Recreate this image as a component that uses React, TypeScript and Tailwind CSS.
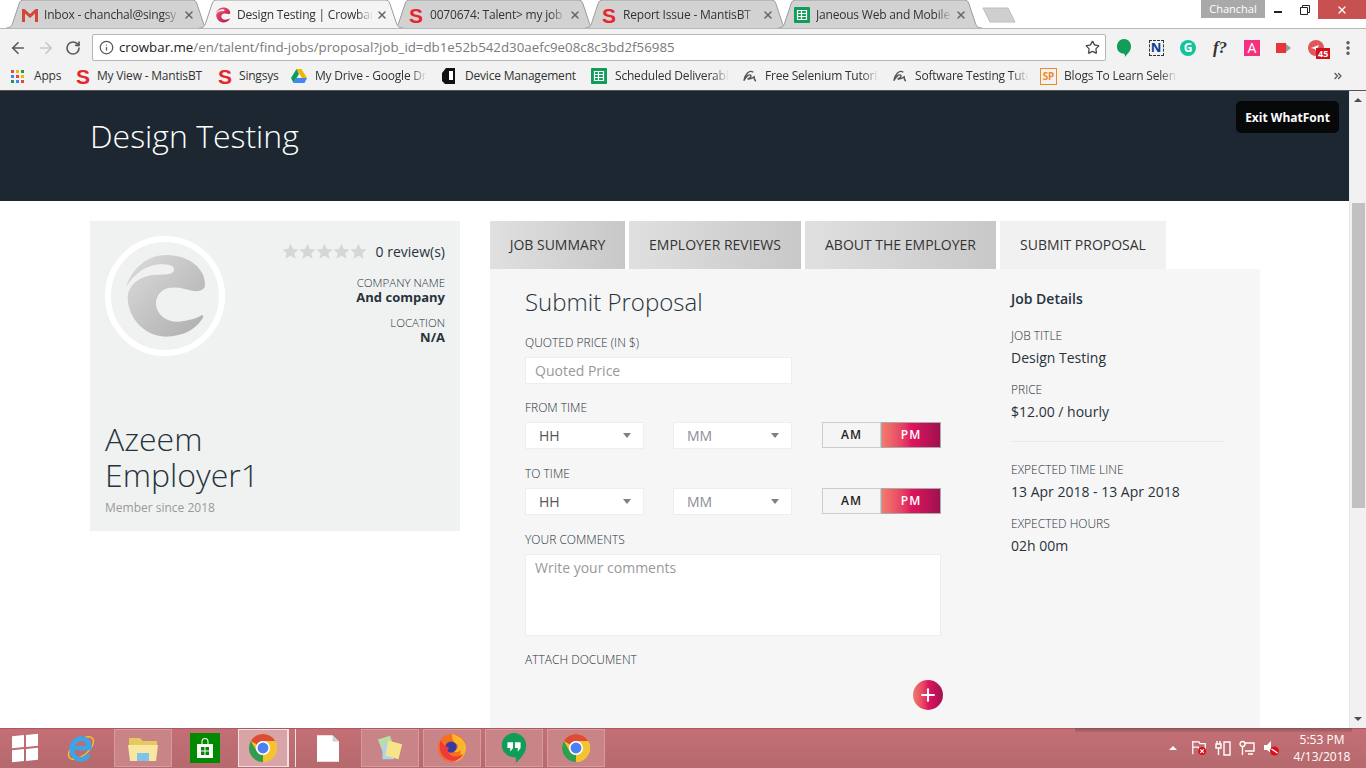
import { ArrowLeft, ArrowRight, ChevronsRight, Info, MoreVertical, Plus, RotateCw, Star, X } from 'lucide-react';
import type { ReactNode } from 'react';

const CROWBAR_PATH =
    'M138 232C150 190 190 135 260 135C330 135 378 180 375 225C374 240 360 245 340 243C315 238 290 228 262 235C240 242 226 262 228 285C231 315 262 337 295 335C325 333 350 325 365 316C372 314 370 322 366 328C345 360 305 380 258 380C195 380 145 325 143 265C143 225 180 195 230 194C255 194 282 195 282 178C282 165 262 163 240 163C195 165 160 195 138 232Z';

function CrowbarFavicon() {
    return (
        <svg viewBox="125 125 260 265" className="h-[16px] w-[16px]">
            <defs>
                <linearGradient id="fav" x1="0" y1="0" x2="1" y2="1">
                    <stop offset="0" stopColor="#ef5a6f" />
                    <stop offset="1" stopColor="#b0124f" />
                </linearGradient>
            </defs>
            <path d={CROWBAR_PATH} fill="url(#fav)" />
        </svg>
    );
}

function GmailIcon() {
    return (
        <svg viewBox="0 0 16 14" className="h-[14px] w-[16px]">
            <path d="M0 1h2.500L8 6l5.500-5H16v13h-3V5.500L8 10 3 5.500V14H0z" fill="#d44638" />
        </svg>
    );
}

function SingsysIcon() {
    return <span className="w-[16px] text-center font-['Liberation_Sans',sans-serif] text-[21px] leading-none font-bold text-[#e5262a]">S</span>;
}

function SheetsIcon() {
    return (
        <svg viewBox="0 0 16 16" className="h-[16px] w-[16px]">
            <rect width="16" height="16" rx="1" fill="#0f9d58" />
            <path d="M3.500 3.500h9v9h-9zM3.500 6.500h9M3.500 9.500h9M7.500 3.500v9" fill="none" stroke="#fff" strokeWidth="1.200" />
        </svg>
    );
}

function TabShape({ active }: { active: boolean }) {
    return (
        <svg viewBox="0 0 204 28" className="absolute inset-0 h-[28px] w-[204px]">
            <path
                d="M0 28C5 28 6 25 7 22L13 4C14 1 15 0 18 0H186C189 0 190 1 191 4L197 22C198 25 199 28 204 28"
                fill={active ? '#f4f4f4' : '#d2d2d2'}
                stroke="#9c9c9c"
            />
        </svg>
    );
}

const TABS: { title: string; icon: ReactNode; active?: boolean }[] = [
    { title: 'Inbox - chanchal@singsy', icon: <GmailIcon /> },
    { title: 'Design Testing | Crowbar', icon: <CrowbarFavicon />, active: true },
    { title: '0070674: Talent> my job', icon: <SingsysIcon /> },
    { title: 'Report Issue - MantisBT', icon: <SingsysIcon /> },
    { title: 'Janeous Web and Mobile', icon: <SheetsIcon /> },
];

function TabStrip() {
    return (
        <div className="relative flex h-[28px] shrink-0 bg-white pl-[6px]">
            {TABS.map((tab) => (
                <div key={tab.title} className={`relative -mr-[11px] h-[28px] w-[204px] shrink-0 ${tab.active ? 'z-10' : ''}`}>
                    <TabShape active={!!tab.active} />
                    <div className="relative flex h-full items-center pt-[2px] pr-[15px] pl-[16px]">
                        <span className="flex w-[22px] shrink-0 justify-start">{tab.icon}</span>
                        <span className="w-[136px] text-[12px] tracking-[-0.2px] whitespace-nowrap text-[#333] [mask-image:linear-gradient(to_right,black_88%,transparent)]">
                            {tab.title}
                        </span>
                        <X className="ml-[3px] h-[12px] w-[12px] shrink-0 text-[#666]" strokeWidth={3} />
                    </div>
                </div>
            ))}
            <svg viewBox="0 0 34 16" className="mt-[7px] ml-[11px] h-[16px] w-[34px]">
                <path d="M1 1H26L33 15H8Z" fill="#cfcfcf" stroke="#bdbdbd" />
            </svg>
            <div className="ml-auto flex h-[19px] items-start">
                <div className="flex h-[18px] w-[64px] items-center justify-center bg-[#a9a9a9] text-[11px] text-white">Chanchal</div>
                <div className="flex h-[19px] w-[26px] items-center justify-center pt-[5px]">
                    <div className="h-[2px] w-[8px] bg-[#222]" />
                </div>
                <div className="flex h-[19px] w-[27px] items-center justify-center">
                    <svg viewBox="0 0 10 10" className="h-[10px] w-[10px]" fill="none" stroke="#222">
                        <path d="M.5 2.500h7v7h-7zM2.500 2.500v-2h7v7h-2" />
                    </svg>
                </div>
                <div className="flex h-[19px] w-[48px] items-center justify-center bg-[#c75050]">
                    <X className="h-[12px] w-[12px] text-white" strokeWidth={2.500} />
                </div>
            </div>
        </div>
    );
}

function ExtensionIcons() {
    return (
        <div className="ml-[2px] flex items-center">
            <span className="flex w-[32px] justify-center">
                <svg viewBox="0 0 16 20" className="h-[20px] w-[16px]">
                    <path d="M8 1c4 0 7 3 7 7.500S12 15 9 19c0-3-.5-3.500-2-3.500C3 15 1 12.500 1 8.500S4 1 8 1z" fill="#0f9d58" />
                </svg>
            </span>
            <span className="flex w-[32px] justify-center">
                <span className="flex h-[16px] w-[15px] items-center justify-center border border-dashed border-[#333] text-[13px] leading-none font-bold text-[#0b3d91]">N</span>
            </span>
            <span className="flex w-[32px] justify-center">
                <span className="flex h-[16px] w-[16px] items-center justify-center rounded-full bg-[#15c39a] text-[12px] leading-none font-bold text-white">G</span>
            </span>
            <span className="flex w-[32px] justify-center font-['Liberation_Serif',serif] text-[17px] leading-none font-bold text-[#333] italic">f?</span>
            <span className="flex w-[32px] justify-center">
                <span className="flex h-[16px] w-[16px] items-center justify-center bg-[#f5317f] text-[14px] leading-none text-white">A</span>
            </span>
            <span className="flex w-[32px] justify-center">
                <svg viewBox="0 0 16 14" className="h-[14px] w-[16px]">
                    <path d="M0 2h10v10H0z" fill="#e8343a" />
                    <path d="M10 3l5 4-5 4z" fill="#9a9a9a" />
                </svg>
            </span>
            <span className="relative flex w-[32px] justify-center">
                <svg viewBox="0 0 16 16" className="h-[16px] w-[16px]">
                    <circle cx="8" cy="8" r="8" fill="#e0565b" />
                    <path d="M3 8l8-3-3 6-1-2z" fill="#fff" />
                </svg>
                <span className="absolute top-[8px] left-[16px] bg-[#d0101c] px-[2px] text-[9px] leading-[11px] font-bold text-white">45</span>
            </span>
            <span className="flex w-[32px] justify-center">
                <MoreVertical className="h-[18px] w-[18px] text-[#555]" strokeWidth={2.500} />
            </span>
        </div>
    );
}

function Toolbar() {
    return (
        <div className="flex h-[34px] shrink-0 items-center border-t border-[#b8b8b8] bg-[#f2f2f2] pt-[4px] pl-[9px]">
            <ArrowLeft className="h-[18px] w-[18px] text-[#5a5a5a]" strokeWidth={2.200} />
            <ArrowRight className="ml-[10px] h-[18px] w-[18px] text-[#c8c8c8]" strokeWidth={2.200} />
            <RotateCw className="ml-[10px] h-[16px] w-[16px] text-[#5a5a5a]" strokeWidth={2.500} />
            <div className="ml-[11px] flex h-[27px] w-[1014px] items-center rounded-[2px] border border-[#b5b5b5] bg-white pr-[5px] pl-[6px] text-[13.3px]">
                <Info className="h-[15px] w-[15px] text-[#555]" strokeWidth={2} />
                <span className="ml-[5px] text-[#222]">crowbar.me</span>
                <span className="text-[#7a7a7a]">/en/talent/find-jobs/proposal?job_id=db1e52b542d30aefc9e08c8c3bd2f56985</span>
                <Star className="ml-auto h-[15px] w-[15px] text-[#444]" strokeWidth={2} />
            </div>
            <ExtensionIcons />
        </div>
    );
}

function AppsIcon() {
    const colors = ['#e8453c', '#f4b400', '#0f9d58', '#4285f4', '#e8453c', '#f4b400', '#0f9d58', '#4285f4', '#e8453c'];
    return (
        <span className="grid w-[13px] grid-cols-3 gap-[2px]">
            {colors.map((c, i) => (
                <span key={i} className="h-[3px] w-[3px]" style={{ background: c }} />
            ))}
        </span>
    );
}

function DriveIcon() {
    return (
        <svg viewBox="0 0 16 14" className="h-[14px] w-[16px]">
            <path d="M5.500 0h5L16 9h-5z" fill="#f4b400" />
            <path d="M5.500 0L0 9l2.500 5L8 5z" fill="#0f9d58" />
            <path d="M2.500 14h11L16 9H5z" fill="#4285f4" />
        </svg>
    );
}

function DeviceIcon() {
    return (
        <svg viewBox="0 0 16 18" className="h-[18px] w-[16px]">
            <path d="M5 1h9v16H4L1 14V6z" fill="#111" />
            <rect x="8" y="4" width="4" height="9" fill="#fff" />
        </svg>
    );
}

function TutorialIcon() {
    return (
        <svg viewBox="0 0 16 14" className="h-[14px] w-[15px]" fill="none" stroke="#555" strokeWidth="1.500">
            <path d="M12 3C8 0 3 5 2 12 4 8 7 5 9 6c2 1-1 4-3 4 3 1 5-1 7-2 0 2 0 4 2 4" />
        </svg>
    );
}

function SpIcon() {
    return <span className="flex h-[17px] w-[17px] items-center justify-center border border-[#f08a24] text-[10px] leading-none font-bold text-[#f08a24]">SP</span>;
}

const BOOKMARKS: { label: string; icon: ReactNode; box: string; text: string; fade?: boolean }[] = [
    { label: 'Apps', icon: <AppsIcon />, box: 'w-[64px]', text: 'ml-[10px] w-[28px]' },
    { label: 'My View - MantisBT', icon: <SingsysIcon />, box: 'w-[142px]', text: 'ml-[6px] w-[106px]' },
    { label: 'Singsys', icon: <SingsysIcon />, box: 'w-[74px]', text: 'ml-[6px] w-[40px]' },
    { label: 'My Drive - Google Dr', icon: <DriveIcon />, box: 'w-[150px]', text: 'ml-[8px] w-[112px]', fade: true },
    { label: 'Device Management', icon: <DeviceIcon />, box: 'w-[150px]', text: 'ml-[8px] w-[110px]' },
    { label: 'Scheduled Deliverabl', icon: <SheetsIcon />, box: 'w-[151px]', text: 'ml-[8px] w-[114px]', fade: true },
    { label: 'Free Selenium Tutoria', icon: <TutorialIcon />, box: 'w-[150px]', text: 'ml-[8px] w-[114px]', fade: true },
    { label: 'Software Testing Tuto', icon: <TutorialIcon />, box: 'w-[148px]', text: 'ml-[8px] w-[114px]', fade: true },
    { label: 'Blogs To Learn Seleni', icon: <SpIcon />, box: 'w-[150px]', text: 'ml-[7px] w-[113px]', fade: true },
];

function BookmarksBar() {
    return (
        <div className="flex h-[29px] shrink-0 items-center border-b border-[#555] bg-[#f2f2f2] pl-[11px] text-[12px] tracking-[-0.2px] text-[#333]">
            {BOOKMARKS.map((b) => (
                <div key={b.label} className={`flex shrink-0 items-center ${b.box}`}>
                    {b.icon}
                    <span className={`whitespace-nowrap ${b.text} ${b.fade ? '[mask-image:linear-gradient(to_right,black_85%,transparent)]' : ''}`}>{b.label}</span>
                </div>
            ))}
            <ChevronsRight className="ml-auto mr-[22px] h-[12px] w-[12px] text-[#555]" strokeWidth={2.500} />
        </div>
    );
}

function RatingStar() {
    return (
        <svg viewBox="0 0 20 20" className="h-[17px] w-[17px]" fill="#d6d6d6">
            <polygon points="10,1 12.900,7 19.500,7.600 14.500,12 16,18.500 10,15 4,18.500 5.500,12 .5,7.600 7.100,7" />
        </svg>
    );
}

function EmployerCard() {
    return (
        <aside className="flex h-[310px] w-[370px] shrink-0 flex-col bg-[#f0f2f2] px-[15px] pt-[15px] text-[#28323c]">
            <div className="flex justify-between">
                <svg viewBox="75 78 360 360" className="h-[120px] w-[120px]">
                    <defs>
                        <linearGradient id="avatar" x1="0" y1="0" x2="1" y2="1">
                            <stop offset="0" stopColor="#dcdcdc" />
                            <stop offset="1" stopColor="#adadad" />
                        </linearGradient>
                    </defs>
                    <circle cx="255" cy="258" r="171" fill="none" stroke="#fff" strokeWidth="18" />
                    <path d={CROWBAR_PATH} fill="url(#avatar)" />
                </svg>
                <div className="flex flex-col items-end">
                    <div className="mt-[5px] flex h-[20px] items-center text-[14px]">
                        {[0, 1, 2, 3, 4].map((i) => (
                            <RatingStar key={i} />
                        ))}
                        <span className="ml-[9px]">0 review(s)</span>
                    </div>
                    <div className="mt-[15px] text-[11.500px] leading-[14px] font-light">COMPANY NAME</div>
                    <div className="text-[13px] leading-[15px] font-bold">And company</div>
                    <div className="mt-[11px] text-[11.500px] leading-[14px] font-light">LOCATION</div>
                    <div className="text-[13px] leading-[15px] font-bold">N/A</div>
                </div>
            </div>
            <h2 className="mt-[65px] w-[200px] text-[32px] leading-[36px] font-light">Azeem Employer1</h2>
            <p className="mt-[6px] text-[12px] leading-[18px] text-[#999]">Member since 2018</p>
        </aside>
    );
}

function Label({ children }: { children: ReactNode }) {
    return <div className="text-[12px] leading-[16px] font-light text-[#28323c]">{children}</div>;
}

function SelectBox({ value, dark }: { value: string; dark?: boolean }) {
    return (
        <div className={`flex h-[27px] w-[119px] items-center justify-between border border-[#eee] bg-white pr-[12px] pb-[1px] pl-[13px] text-[14px] ${dark ? 'text-[#555]' : 'text-[#8a8f96]'}`}>
            {value}
            <span className="mt-[1px] h-0 w-0 border-x-[4.500px] border-t-[5px] border-x-transparent border-t-[#808080]" />
        </div>
    );
}

function TimeRow() {
    return (
        <div className="mt-[6px] flex">
            <SelectBox value="HH" dark />
            <div className="ml-[29px]">
                <SelectBox value="MM" />
            </div>
            <div className="ml-[30px] flex h-[26px] w-[119px] text-[12px] font-semibold tracking-[1px]">
                <div className="flex w-[59px] items-center justify-center border border-[#ccc] bg-[#f5f5f5] text-[#222]">AM</div>
                <div className="flex w-[60px] items-center justify-center border border-[#aaa] bg-gradient-to-r from-[#f27a6c] via-[#e0155f] to-[#a0114f] text-white">PM</div>
            </div>
        </div>
    );
}

function ProposalForm() {
    return (
        <div className="w-[416px] shrink-0">
            <h3 className="mt-[16px] text-[24px] leading-[34px] font-light text-[#28323c]">Submit Proposal</h3>
            <div className="mt-[16px]">
                <Label>QUOTED PRICE (IN $)</Label>
            </div>
            <input
                readOnly
                placeholder="Quoted Price"
                className="mt-[6px] block h-[27px] w-[267px] border border-[#eee] bg-white px-[9px] text-[14px] placeholder:text-[#999]"
            />
            <div className="mt-[16px]">
                <Label>FROM TIME</Label>
            </div>
            <TimeRow />
            <div className="mt-[17px]">
                <Label>TO TIME</Label>
            </div>
            <TimeRow />
            <div className="mt-[17px]">
                <Label>YOUR COMMENTS</Label>
            </div>
            <textarea
                readOnly
                placeholder="Write your comments"
                className="mt-[6px] block h-[82px] w-[416px] resize-none border border-[#eee] bg-white px-[9px] py-[2px] text-[14px] placeholder:text-[#999]"
            />
            <div className="mt-[16px]">
                <Label>ATTACH DOCUMENT</Label>
            </div>
            <div className="mt-[12px] flex justify-end">
                <div className="-mr-[2px] flex h-[30px] w-[30px] items-center justify-center rounded-full bg-gradient-to-r from-[#ef7a6a] via-[#e0155f] to-[#a0114f]">
                    <Plus className="h-[20px] w-[20px] text-white" strokeWidth={2.500} />
                </div>
            </div>
        </div>
    );
}

function JobDetails() {
    const Row = ({ label, value, top }: { label: string; value: string; top: string }) => (
        <div className={top}>
            <div className="text-[12px] leading-[16px] font-light">{label}</div>
            <div className="mt-[4px] text-[14px] leading-[20px]">{value}</div>
        </div>
    );
    return (
        <div className="ml-[70px] w-[213px] shrink-0 pt-[20px] text-[#28323c]">
            <h4 className="text-[14px] leading-[20px] font-semibold">Job Details</h4>
            <Row label="JOB TITLE" value="Design Testing" top="mt-[19px]" />
            <Row label="PRICE" value="$12.00 / hourly" top="mt-[14px]" />
            <div className="mt-[19px] border-t border-[#e9e9e9]" />
            <Row label="EXPECTED TIME LINE" value="13 Apr 2018 - 13 Apr 2018" top="mt-[20px]" />
            <Row label="EXPECTED HOURS" value="02h 00m" top="mt-[14px]" />
        </div>
    );
}

const PANEL_TABS = [
    { label: 'JOB SUMMARY', box: 'w-[135px] bg-gradient-to-r from-[#e0e0e0] to-[#c8c8c8]' },
    { label: 'EMPLOYER REVIEWS', box: 'w-[172px] bg-gradient-to-r from-[#e0e0e0] to-[#c8c8c8]' },
    { label: 'ABOUT THE EMPLOYER', box: 'w-[191px] bg-gradient-to-r from-[#e0e0e0] to-[#c8c8c8]' },
    { label: 'SUBMIT PROPOSAL', box: 'w-[166px] bg-[#f1f1f1]' },
];

function ProposalPanel() {
    return (
        <section className="ml-[30px] w-[770px] shrink-0">
            <div className="flex gap-[4px]">
                {PANEL_TABS.map((t) => (
                    <div key={t.label} className={`flex h-[48px] items-center justify-center pb-[1px] text-[14px] text-[#333] ${t.box}`}>
                        {t.label}
                    </div>
                ))}
            </div>
            <div className="flex h-[470px] bg-[#f6f6f6] pl-[35px]">
                <ProposalForm />
                <JobDetails />
            </div>
        </section>
    );
}

function Scrollbar() {
    return (
        <div className="flex w-[17px] shrink-0 flex-col items-center border-l border-[#e8e8e8] bg-[#f1f1f1]">
            <span className="mt-[7px] h-0 w-0 border-x-[4px] border-b-[4px] border-x-transparent border-b-[#505050]" />
            <div className="mt-[101px] h-[305px] w-[13px] bg-[#c1c1c1]" />
            <span className="mt-auto mb-[7px] h-0 w-0 border-x-[4px] border-t-[4px] border-x-transparent border-t-[#505050]" />
        </div>
    );
}

function ChromeLogo() {
    const sector = 'M3.010 8.500A15 15 0 0 1 28.990 8.500H16A7.500 7.500 0 0 0 9.500 12.250Z';
    return (
        <svg viewBox="0 0 32 32" className="h-[30px] w-[30px]">
            <circle cx="16" cy="16" r="15" fill="#f4c430" />
            <path d={sector} fill="#dd4b39" />
            <path d={sector} fill="#f4c430" transform="rotate(120 16 16)" />
            <path d={sector} fill="#2f9e53" transform="rotate(-120 16 16)" />
            <circle cx="16" cy="16" r="7.500" fill="#fff" />
            <circle cx="16" cy="16" r="5.800" fill="#4a80f0" />
        </svg>
    );
}

function TaskTile({ children, active }: { children: ReactNode; active?: boolean }) {
    return (
        <div className={`flex h-[38px] shrink-0 items-center justify-center border ${active ? 'w-[50px] border-[#f0e0e0] bg-[#d8a4a7]' : 'w-[58px] border-[#d79a9d] bg-[#c98488]'}`}>
            {children}
        </div>
    );
}

function TrayFlag() {
    return (
        <svg viewBox="0 0 18 18" className="h-[16px] w-[18px]">
            <path d="M2 1v15M2 2h7l1 2h6v6H9L8 8H2" fill="none" stroke="#fff" strokeWidth="1.400" />
            <circle cx="12.500" cy="12.500" r="4.500" fill="#d8101c" />
            <path d="M10.500 10.500l4 4M14.500 10.500l-4 4" stroke="#fff" strokeWidth="1.300" />
        </svg>
    );
}

function Taskbar() {
    return (
        <footer className="relative flex h-[40px] shrink-0 items-center bg-gradient-to-b from-[#c46f75] to-[#b56a6d] shadow-[inset_0_1px_0_#a85a5e]">
            <div className="absolute top-0 left-[1075px] h-[5px] w-[277px] bg-gradient-to-b from-[#8a5558] to-transparent" />
            <div className="ml-[12px] grid h-[26px] w-[26px] -skew-y-[6deg] grid-cols-2 gap-[2px]">
                <span className="bg-white" />
                <span className="bg-white" />
                <span className="bg-white" />
                <span className="bg-white" />
            </div>
            <svg viewBox="0 0 32 32" className="ml-[28px] h-[32px] w-[30px]">
                <ellipse cx="16" cy="16" rx="16" ry="8" fill="none" stroke="#f4c430" strokeWidth="1.500" transform="rotate(-40 16 16)" />
                <path d="M7 16h18c0-6-4-10-9-10S6 11 6 17s4 11 10 11c4 0 7-2 8-5" fill="none" stroke="#3aa6e8" strokeWidth="5" />
            </svg>
            <div className="ml-[18px] flex items-center gap-[18px]">
                <TaskTile>
                    <svg viewBox="0 0 32 28" className="h-[28px] w-[32px]">
                        <path d="M2 4h11l3 3h14v5H2z" fill="#e8c860" />
                        <path d="M1 11h30l-2 16H3z" fill="#f8e7a0" />
                        <path d="M10 19h12v8H10z" fill="#7cc4ea" />
                    </svg>
                </TaskTile>
                <div className="flex h-[30px] w-[30px] items-center justify-center bg-[#008a00]">
                    <svg viewBox="0 0 16 20" className="h-[20px] w-[16px]">
                        <path d="M0 6h16v14H0zM4.500 6V3.500a3.500 3.500 0 0 1 7 0V6h-1V3.500a2.500 2.500 0 0 0-5 0V6z" fill="#fff" />
                        <path d="M4 9h3.500v3.500H4zM8.500 9H12v3.500H8.500zM4 13.500h3.500V17H4zM8.500 13.500H12V17H8.500z" fill="#008a00" />
                    </svg>
                </div>
                <div className="flex items-center">
                    <TaskTile active>
                        <ChromeLogo />
                    </TaskTile>
                    <div className="h-[38px] w-[8px] border-x border-[#f0e0e0]" />
                </div>
            </div>
            <svg viewBox="0 0 24 30" className="ml-[21px] h-[30px] w-[22px]">
                <path d="M0 1h17l7 7v22H0z" fill="#fff" />
                <path d="M17 1v7h7z" fill="#cfcfcf" />
            </svg>
            <div className="ml-[22px] flex gap-[4px]">
                <TaskTile>
                    <svg viewBox="0 0 32 32" className="h-[30px] w-[30px]">
                        <path d="M3 7l13-4 5 15-12 4z" fill="#b7dfa5" />
                        <path d="M8 12h12v16H8z" fill="#a8d4ee" />
                        <path d="M14 8l15 4-4 16-14-4z" fill="#f7e48a" />
                    </svg>
                </TaskTile>
                <TaskTile>
                    <svg viewBox="0 0 32 32" className="h-[32px] w-[30px]">
                        <circle cx="16" cy="16" r="15" fill="#f6701f" />
                        <path d="M16 1c9 2 15 8 15 15s-5 14-13 15c6-3 8-8 7-13-2 3-6 3-8 1 4 0 6-3 5-7-3-1-6-3-6-11z" fill="#fcb62e" />
                        <circle cx="15" cy="15" r="6" fill="#3a3a9e" />
                        <path d="M4 8c-3 8 0 18 9 21 7 2 13-2 15-7-5 4-12 4-15 0-2-2-2-5 0-6-3-1-6-3-9-8z" fill="#ee3a3f" />
                    </svg>
                </TaskTile>
                <TaskTile>
                    <svg viewBox="0 0 28 34" className="h-[32px] w-[28px]">
                        <path d="M14 1c7 0 13 6 13 13 0 8-6 14-11 19v-6C7 27 1 21 1 14 1 7 7 1 14 1z" fill="#0f9d58" />
                        <path d="M7 11h6v6l-3 4v-4H7zM15 11h6v6l-3 4v-4h-3z" fill="#fff" />
                    </svg>
                </TaskTile>
                <TaskTile>
                    <ChromeLogo />
                </TaskTile>
            </div>
            <div className="ml-auto flex items-center text-white">
                <span className="h-0 w-0 border-x-[4px] border-b-[4px] border-x-transparent border-b-white" />
                <span className="ml-[13px]">
                    <TrayFlag />
                </span>
                <svg viewBox="0 0 16 16" className="ml-[7px] h-[16px] w-[16px]" fill="none" stroke="#fff" strokeWidth="1.400">
                    <path d="M9 2h6v13H9zM2 1v3M5 1v3M1 4h5v4H1zM3.500 8v7" />
                </svg>
                <svg viewBox="0 0 16 16" className="ml-[8px] h-[16px] w-[16px]" fill="none" stroke="#fff" strokeWidth="1.400">
                    <circle cx="3.500" cy="4" r="2.500" />
                    <path d="M3.500 6.500V15M6 3h9v8H6M9 14h5" />
                </svg>
                <svg viewBox="0 0 16 16" className="ml-[8px] h-[16px] w-[16px]">
                    <path d="M1 5h3l4-4v12L4 10H1z" fill="#fff" />
                    <circle cx="11.500" cy="11" r="4.500" fill="#d8101c" />
                    <path d="M8.500 9l6 4" stroke="#fff" strokeWidth="1.500" />
                </svg>
                <div className="ml-[13px] w-[60px] text-center text-[12px] leading-[17px]">
                    <div>5:53 PM</div>
                    <div>4/13/2018</div>
                </div>
                <div className="w-[14px]" />
            </div>
        </footer>
    );
}

export default function App() {
    return (
        <div className="flex h-[768px] w-[1366px] flex-col overflow-hidden bg-white font-['Open_Sans',sans-serif]">
            <TabStrip />
            <Toolbar />
            <BookmarksBar />
            <div className="flex min-h-0 flex-1">
                <main className="relative min-w-0 flex-1 overflow-hidden">
                    <header className="relative h-[110px] bg-[#1d2731] pt-[23px] pl-[90px] text-[32px] leading-[44px] font-light text-white">
                        Design Testing
                        <div className="absolute top-[10px] right-[10px] flex h-[32px] w-[103px] items-center justify-center rounded-[5px] bg-[#06080a] pt-[1px] text-[12px] font-bold">
                            Exit WhatFont
                        </div>
                    </header>
                    <div className="flex px-[90px] pt-[20px]">
                        <EmployerCard />
                        <ProposalPanel />
                    </div>
                </main>
                <Scrollbar />
            </div>
            <Taskbar />
        </div>
    );
}
